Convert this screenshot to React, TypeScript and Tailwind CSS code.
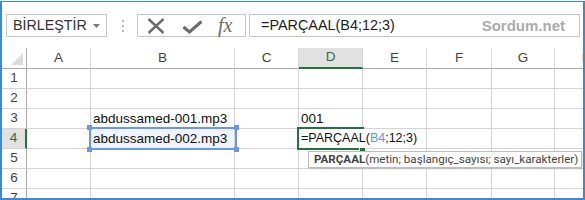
import React from 'react';

const colLabels = ['A', 'B', 'C', 'D', 'E', 'F', 'G', 'H'];
const rows = [1, 2, 3, 4, 5, 6, 7];

function cellText(r: number, c: number): string {
  if (r === 3 && c === 1) return 'abdussamed-001.mp3';
  if (r === 4 && c === 1) return 'abdussamed-002.mp3';
  if (r === 3 && c === 3) return '001';
  return '';
}

function Handle({ cls }: { cls: string }) {
  return <div className={`absolute w-[5px] h-[5px] bg-[#6a95e8] ${cls}`} />;
}

export default function App() {
  return (
    <div className="w-[585px] h-[200px] bg-white overflow-hidden font-['Liberation_Sans',Arial,sans-serif]">
      <div className="mt-px h-[199px] border-t border-l-2 border-r-2 border-b-2 border-[#3b8ad9] overflow-hidden">
        {/* Formula bar */}
        <div className="flex items-center pt-[12px]">
          <div className="ml-[4px] w-[101px] h-[23px] border border-[#c6c6c6] flex items-center pl-[6px] pr-[6px] justify-between">
            <span className="text-[14.3px] text-[#333] leading-none">BİRLEŞTİR</span>
            <svg width="7" height="4" viewBox="0 0 7 4">
              <path d="M0 0 L7 0 L3.5 4 Z" fill="#777" />
            </svg>
          </div>
          <div className="ml-[15px] flex flex-col gap-[3px]">
            <div className="w-[2px] h-[2px] bg-[#b5b5b5]" />
            <div className="w-[2px] h-[2px] bg-[#b5b5b5]" />
            <div className="w-[2px] h-[2px] bg-[#b5b5b5]" />
          </div>
          <div className="ml-[13px] w-[109px] h-[23px] border border-[#c6c6c6] flex items-center">
            <svg width="18" height="16" viewBox="0 0 18 16" className="ml-[9px]">
              <path d="M1.5 1 L16.5 15 M16.5 1 L1.5 15" stroke="#6b6b6b" strokeWidth="2.4" />
            </svg>
            <svg width="21" height="14" viewBox="0 0 21 14" className="ml-[17px] mt-[3px]">
              <path d="M1.5 7 L7.5 12 L19.5 1.5" stroke="#6b6b6b" strokeWidth="3" fill="none" />
            </svg>
            <span className="ml-[15px] font-['Liberation_Serif',serif] italic text-[20px] text-[#6b6b6b] leading-none -mt-[2px]">fx</span>
          </div>
          <div className="ml-[3px] w-[331px] h-[23px] border border-[#c6c6c6] flex items-center justify-between pl-[11px] pr-[14px]">
            <span className="text-[14.4px] text-[#222] leading-none">=PARÇAAL(B4;12;3)</span>
            <span className="text-[15px] font-bold text-[#ababab] leading-none">Sordum.net</span>
          </div>
        </div>

        {/* Grid */}
        <div className="relative mt-[11px] w-[617px]">
          <div className="grid grid-cols-[25px_64px_144px_64px_64px_64px_65px_63px_64px]">
            {/* header row */}
            <div className="h-[21px] border-r border-b border-[#ababab] relative">
              <svg width="12" height="12" viewBox="0 0 12 12" className="absolute right-[3px] bottom-[3px]">
                <path d="M12 0 L12 12 L0 12 Z" fill="#dcdcdc" />
              </svg>
            </div>
            {colLabels.map((l) =>
              l === 'D' ? (
                <div
                  key={l}
                  className="h-[21px] border-r border-r-[#d4d4d4] border-b-2 border-b-[#217346] bg-[#e1e1e1] flex items-center justify-center text-[13.5px] text-[#217346]"
                >
                  {l}
                </div>
              ) : (
                <div
                  key={l}
                  className="h-[21px] border-r border-r-[#dadada] border-b border-b-[#ababab] flex items-center justify-center text-[13.5px] text-[#444]"
                >
                  {l}
                </div>
              )
            )}
            {rows.map((r) => (
              <React.Fragment key={r}>
                {r === 4 ? (
                  <div className="h-[20px] border-r-2 border-r-[#217346] border-b border-b-[#d4d4d4] bg-[#e1e1e1] flex items-center justify-center text-[13.5px] text-[#217346]">
                    {r}
                  </div>
                ) : (
                  <div className="h-[20px] border-r border-r-[#ababab] border-b border-b-[#d4d4d4] flex items-center justify-center text-[13.5px] text-[#444]">
                    {r}
                  </div>
                )}
                {colLabels.map((l, c) => (
                  <div
                    key={l}
                    className={`h-[20px] border-r border-b border-[#d4d4d4] pl-[2px] text-[13.5px] leading-[20px] text-[#111] whitespace-nowrap ${
                      r === 4 && c === 1 ? 'bg-[#eef3fc]' : ''
                    }`}
                  >
                    {cellText(r, c)}
                  </div>
                ))}
              </React.Fragment>
            ))}
          </div>

          {/* B4 reference selection */}
          <div className="absolute left-[87px] top-[79px] w-[148px] h-[23px] border-2 border-[#6a95e8]">
            <Handle cls="-left-[4px] -top-[4px]" />
            <Handle cls="-right-[4px] -top-[4px]" />
            <Handle cls="-left-[4px] -bottom-[4px]" />
            <Handle cls="-right-[4px] -bottom-[4px]" />
          </div>

          {/* D4 editing text */}
          <div className="absolute left-[297px] top-[81px] h-[19px] w-[123px] bg-white pl-[2px] text-[12.5px] leading-[19px] text-[#111] whitespace-nowrap">
            =PARÇAAL(<span className="text-[#6a95e8]">B4</span>;12;3)
          </div>
          {/* D4 active border */}
          <div className="absolute left-[295px] top-[79px] w-[67px] h-[23px] border-2 border-r-0 border-[#217346]" />
          <div className="absolute left-[357px] top-[99px] w-[5px] h-[5px] bg-[#217346] border border-white box-content" />

          {/* Tooltip */}
          <div className="absolute left-[306px] top-[103px] w-[274px] h-[17px] bg-white border border-[#bdbdbd] shadow-[1px_1px_2px_rgba(0,0,0,0.15)] flex items-center pl-[5px] whitespace-nowrap font-['Roboto',sans-serif] text-[11.6px] text-[#444]">
            <span className="font-bold text-[#444]">PARÇAAL</span>
            <span>(metin; başlangıç_sayısı; sayı_karakterler)</span>
          </div>
        </div>
      </div>
    </div>
  );
}
